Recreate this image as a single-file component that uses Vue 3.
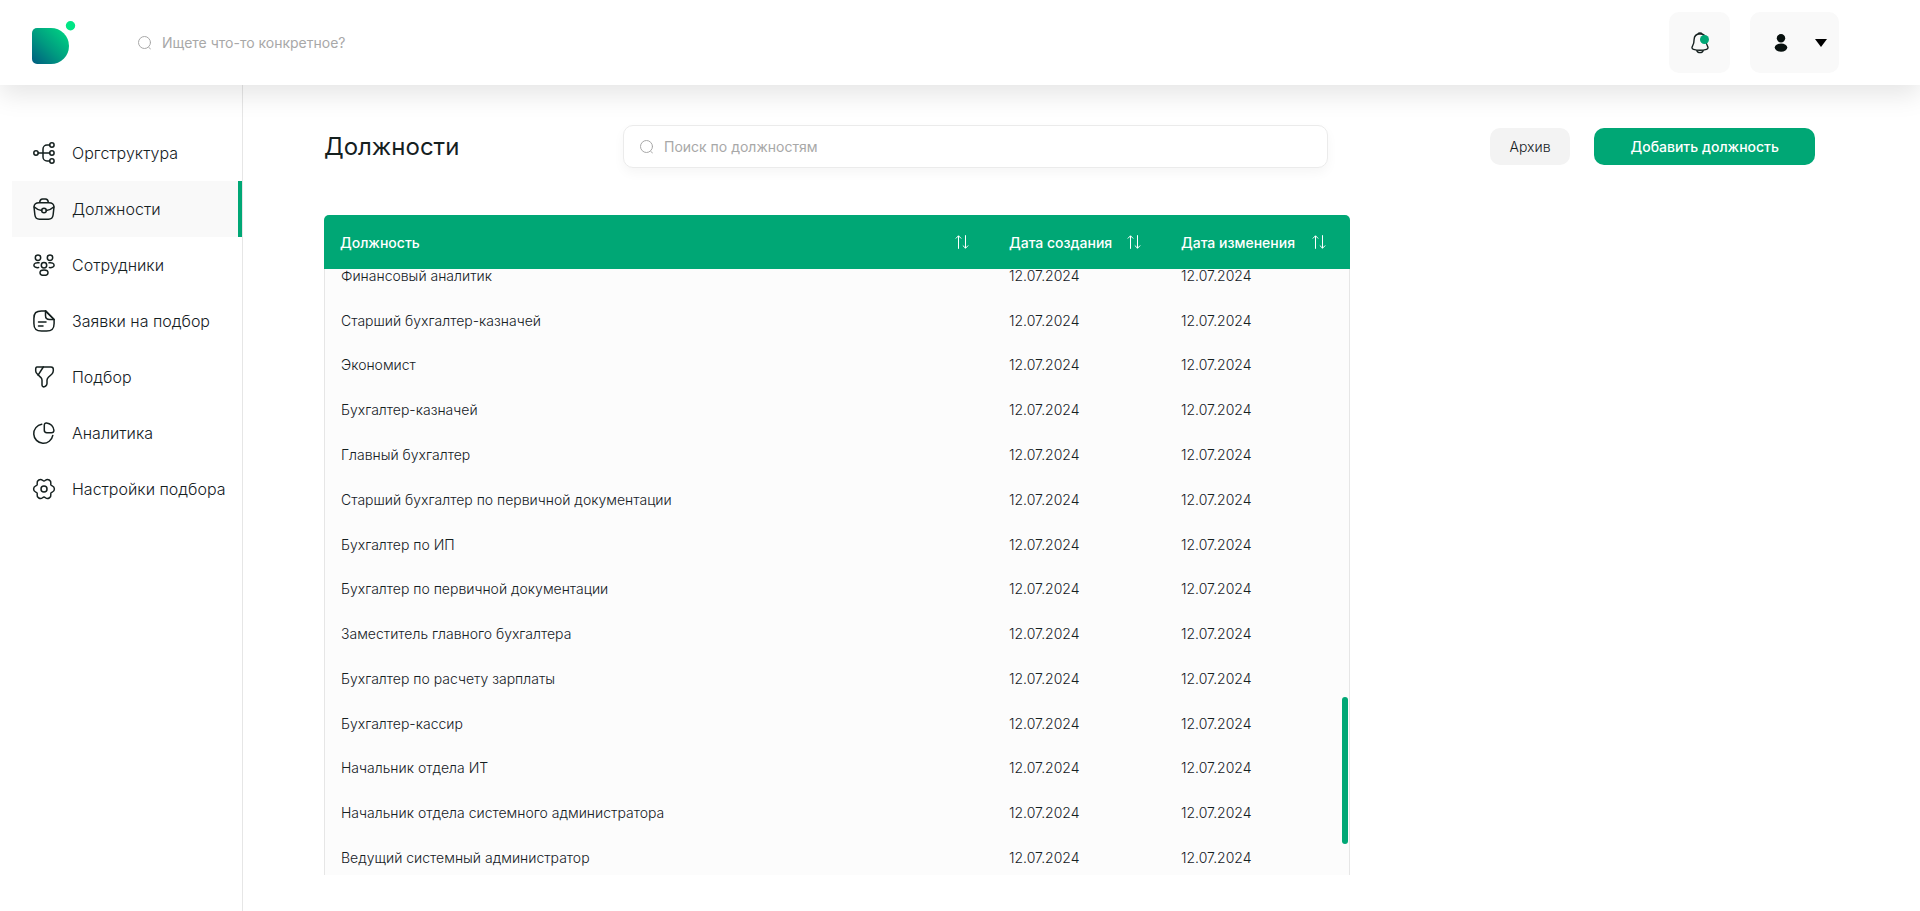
<script setup>
import { ref, onMounted } from 'vue'

const menu = [
  { id: 'org', label: 'Оргструктура' },
  { id: 'jobs', label: 'Должности' },
  { id: 'staff', label: 'Сотрудники' },
  { id: 'requests', label: 'Заявки на подбор' },
  { id: 'hiring', label: 'Подбор' },
  { id: 'analytics', label: 'Аналитика' },
  { id: 'settings', label: 'Настройки подбора' }
]
const active = ref('jobs')

const columns = ['Должность', 'Дата создания', 'Дата изменения']
const positions = [
  'Финансовый аналитик',
  'Старший бухгалтер-казначей',
  'Экономист',
  'Бухгалтер-казначей',
  'Главный бухгалтер',
  'Старший бухгалтер по первичной документации',
  'Бухгалтер по ИП',
  'Бухгалтер по первичной документации',
  'Заместитель главного бухгалтера',
  'Бухгалтер по расчету зарплаты',
  'Бухгалтер-кассир',
  'Начальник отдела ИТ',
  'Начальник отдела системного администратора',
  'Ведущий системный администратор'
].map(name => ({ name, created: '12.07.2024', changed: '12.07.2024' }))

// Six-lobed outline of the settings gear: lobes every 60°, dips between them.
function gearPath() {
  const knots = Array.from({ length: 12 }, (_, i) => {
    const a = (i * Math.PI) / 6
    const lobe = i % 2 === 0
    const r = lobe ? 10.4 : 8
    const h = lobe ? 3.6 : 1.6
    const x = 11 + r * Math.cos(a)
    const y = 11 + r * Math.sin(a)
    const dx = -Math.sin(a) * h
    const dy = Math.cos(a) * h
    return { at: [x, y], before: [x - dx, y - dy], after: [x + dx, y + dy] }
  })
  const fmt = p => p.map(v => v.toFixed(2)).join(' ')
  const curves = knots.map((k, i) => {
    const next = knots[(i + 1) % knots.length]
    return `C${fmt(k.after)} ${fmt(next.before)} ${fmt(next.at)}`
  })
  return `M${fmt(knots[0].at)}${curves.join('')}z`
}
const gear = gearPath()

const scroller = ref(null)
onMounted(() => {
  scroller.value.scrollTop = 16
})
</script>

<template>
  <div class="app">
    <header class="topbar">
      <a class="logo" href="#" aria-label="На главную">
        <svg width="44" height="44" viewBox="0 0 44 44">
          <defs>
            <linearGradient id="brand" x1="0" y1="1" x2="0.9" y2="0.1">
              <stop offset="0" stop-color="#005c80" />
              <stop offset="0.5" stop-color="#009a80" />
              <stop offset="1" stop-color="#00cf82" />
            </linearGradient>
          </defs>
          <path d="M5 7h14a18 18 0 0 1 0 36H5a5 5 0 0 1-5-5V12a5 5 0 0 1 5-5z" fill="url(#brand)" />
          <circle cx="38.500" cy="4.700" r="4.700" fill="#00e585" />
        </svg>
      </a>
      <label class="search">
        <svg class="lens" width="14" height="14" viewBox="0 0 14 14">
          <circle cx="6.500" cy="6.500" r="6" /><path d="M10.800 11.500l1.600 1.300" />
        </svg>
        <input type="search" placeholder="Ищете что-то конкретное?" aria-label="Поиск по системе">
      </label>
      <button class="tile bell" type="button" aria-label="Уведомления">
        <svg width="18" height="22" viewBox="0 0 18 22">
          <g fill="none" stroke="#15201f" stroke-width="1.400" stroke-linejoin="round">
            <path d="M9 1.800C5.600 2 3.200 4.300 3.100 7.500c0 3.200-.5 4.800-1.500 6.300-1 1.600-.9 3 .9 3.500 4.200 1.200 8.800 1.200 13 0 1.800-.5 1.900-1.900.9-3.500-1-1.500-1.500-3.100-1.500-6.300C14.800 4.300 12.400 2 9 1.800z" />
            <path d="M7 1.800c.7-1.200 3.300-1.200 4 0M5.600 18.200c1.200 3.200 5.600 3.200 6.800 0" />
          </g>
          <circle cx="13.500" cy="7.500" r="4.500" fill="#00a775" />
        </svg>
      </button>
      <button class="tile user" type="button" aria-label="Профиль">
        <svg width="14" height="18" viewBox="0 0 14 18" fill="#08110f">
          <circle cx="7" cy="4.300" r="4.200" /><ellipse cx="7" cy="13.600" rx="6.300" ry="4.200" />
        </svg>
        <svg width="12" height="8" viewBox="0 0 12 8"><path d="M0 0h12L6 8z" /></svg>
      </button>
    </header>

    <div class="body">
      <nav class="sidebar" aria-label="Разделы">
        <a v-for="m in menu" :key="m.id" href="#" class="item" :class="{ active: m.id === active }" @click.prevent="active = m.id">
          <svg width="22" height="22" viewBox="0 0 22 22" class="glyph">
            <template v-if="m.id === 'org'">
              <circle cx="3" cy="11" r="2.200" /><circle cx="18.900" cy="3" r="2.200" />
              <circle cx="18.900" cy="11" r="2.200" /><circle cx="18.900" cy="19" r="2.200" />
              <path d="M5.200 11h11.500M16.700 3H14a4 4 0 0 0-4 4v8a4 4 0 0 0 4 4h2.700" />
            </template>
            <template v-else-if="m.id === 'jobs'">
              <path d="M6.700 4.300C6.900 2 7.600.9 9.500.9h3c1.900 0 2.600 1.100 2.800 3.400" />
              <path d="M6 4.800h10c3 0 4.800 1.700 5 4l-.9 8.200c-.4 3-1.800 4.200-4.600 4.200h-9c-2.800 0-4.200-1.200-4.600-4.200L1 8.800c.2-2.300 2-4 5-4z" />
              <path d="M1.300 9c2 2 4.400 3 7.400 3.400M20.700 9c-2 2-4.400 3-7.400 3.400" />
              <circle cx="11" cy="12.500" r="2.300" />
            </template>
            <template v-else-if="m.id === 'staff'">
              <circle cx="5" cy="3.700" r="2.700" /><circle cx="17" cy="3.700" r="2.700" />
              <circle cx="11" cy="11.300" r="2.700" /><ellipse cx="11" cy="18.700" rx="4" ry="2.600" />
              <path d="M6 8.800C3.200 8.300.9 9.400.9 11.200c0 1.700 2.100 2.700 4.700 2.400M16 8.800c2.800-.5 5.100.6 5.100 2.400 0 1.700-2.100 2.700-4.700 2.400" />
            </template>
            <template v-else-if="m.id === 'requests'">
              <path d="M12.500.9H8.500C3 .9.900 3 .9 8.500v5c0 5.500 2.100 7.600 7.600 7.600h5c5.500 0 7.600-2.100 7.600-7.600V9.500z" />
              <path d="M12.500.9v4.600c0 3 1 4 4 4h4.600M12.500.9l8.600 8.600M5.500 12h7.500M5.500 16h4.500" />
            </template>
            <template v-else-if="m.id === 'hiring'">
              <path d="M4 1h14c1.400 0 2.300.9 2.300 2.300v1.500c0 1.300-.7 2.500-1.600 3.400l-3.300 3c-.8.800-1.400 1.900-1.400 3v3.300c0 .9-.5 2-1.300 2.500l-1 .6c-1.300.7-2.700-.1-2.700-1.500v-4.900c0-.9-.5-1.900-1.100-2.600L4.300 8C3.300 7 2.700 5.900 2.700 5V3.300C2.700 1.900 3.200 1 4 1z" />
              <path d="M10.300 1L5.100 9.200" />
            </template>
            <template v-else-if="m.id === 'analytics'">
              <path d="M8.800 2.200a9.600 9.600 0 1 0 11 11.200" />
              <path d="M13.500.9c4 .3 7.100 3.400 7.400 7.400.1 1.600-.9 2.400-2.400 2.400h-4.700c-1.500 0-2.500-.8-2.500-2.400V3.200c0-1.500.8-2.400 2.200-2.300z" />
            </template>
            <template v-else>
              <circle cx="11" cy="11" r="3" />
              <path :d="gear" />
            </template>
          </svg>
          <span>{{ m.label }}</span>
        </a>
      </nav>

      <main class="content">
        <div class="toolbar">
          <h1>Должности</h1>
          <label class="search boxed">
            <svg class="lens" width="14" height="14" viewBox="0 0 14 14">
              <circle cx="6.500" cy="6.500" r="6" /><path d="M10.800 11.500l1.600 1.300" />
            </svg>
            <input type="search" placeholder="Поиск по должностям" aria-label="Поиск по должностям">
          </label>
          <div class="actions">
            <button type="button" class="btn">Архив</button>
            <button type="button" class="btn primary">Добавить должность</button>
          </div>
        </div>

        <section class="panel">
          <div ref="scroller" class="scroller">
            <table>
              <thead>
                <tr>
                  <th v-for="c in columns" :key="c" scope="col">
                    <div class="head">
                      <span>{{ c }}</span>
                      <button type="button" class="sort" :aria-label="'Сортировать: ' + c">
                        <svg width="14" height="14" viewBox="0 0 14 14">
                          <path d="M3.500 13.800V.8M.8 3.500L3.500.8l2.700 2.700M10.500.2v13M7.800 10.500l2.700 2.700 2.700-2.700" />
                        </svg>
                      </button>
                    </div>
                  </th>
                </tr>
              </thead>
              <tbody>
                <tr v-for="p in positions" :key="p.name">
                  <td>{{ p.name }}</td>
                  <td>{{ p.created }}</td>
                  <td>{{ p.changed }}</td>
                </tr>
              </tbody>
            </table>
          </div>
          <div class="thumb"></div>
        </section>
      </main>
    </div>
  </div>
</template>

<style>
body {
  margin: 0;
  background: #fff;
}
</style>

<style scoped>
.app {
  display: flex;
  flex-direction: column;
  height: 100vh;
  overflow: hidden;
  font-family: Inter, 'Liberation Sans', sans-serif;
  font-size: 14px;
  color: #15201f;
}
.app *,
.app *::before {
  box-sizing: border-box;
}
button,
input {
  font: inherit;
  color: inherit;
  border: 0;
  margin: 0;
  padding: 0;
  background: none;
}
button {
  cursor: pointer;
}
svg {
  display: block;
  flex: none;
}

.topbar {
  position: relative;
  z-index: 2;
  display: flex;
  align-items: center;
  flex: none;
  padding: 12px 81px 12px 32px;
  background: #fff;
  box-shadow: 0 10px 24px rgba(0, 0, 0, 0.1);
}
.logo {
  margin-right: 62px;
}
.search {
  display: flex;
  align-items: center;
  gap: 10px;
  flex: 1;
}
.search input {
  flex: 1;
  min-width: 0;
  outline: none;
}
.search input::placeholder {
  color: #a8a8a8;
  opacity: 1;
}
.lens {
  fill: none;
  stroke: #a8a8a8;
  stroke-width: 1;
  stroke-linecap: round;
}
.tile {
  display: flex;
  align-items: center;
  justify-content: center;
  height: 61px;
  border-radius: 10px;
  background: #f9f9f9;
}
.bell {
  width: 61px;
  margin-right: 20px;
}
.user {
  width: 89px;
  justify-content: space-between;
  padding: 0 12px 0 24px;
}

.body {
  display: flex;
  flex: 1;
  min-height: 0;
}
.sidebar {
  flex: none;
  width: 243px;
  padding: 40px 0 0 12px;
  border-right: 1px solid #e6e6e6;
}
.item {
  display: flex;
  align-items: center;
  gap: 17px;
  height: 56px;
  padding-left: 21px;
  font-size: 16px;
  font-weight: 300;
  color: #15201f;
  white-space: nowrap;
  text-decoration: none;
}
.item.active {
  background: #f9f9f9;
  border-right: 4px solid #00a775;
}
.glyph {
  fill: none;
  stroke: #15201f;
  stroke-width: 1.5;
  stroke-linecap: round;
  stroke-linejoin: round;
  overflow: visible;
}

.content {
  display: flex;
  flex-direction: column;
  flex: 1;
  min-width: 0;
  padding: 40px 105px 36px 81px;
}
.toolbar {
  display: flex;
  align-items: center;
  flex: none;
}
h1 {
  flex: none;
  width: 299px;
  margin: 0;
  font-size: 24px;
  font-weight: 400;
  line-height: 32px;
}
.boxed {
  height: 43px;
  padding: 0 16px;
  border: 1px solid #ebebeb;
  border-radius: 10px;
  box-shadow: 0 5px 12px rgba(0, 0, 0, 0.04);
}
.actions {
  display: flex;
  gap: 24px;
  margin-left: 162px;
}
.btn {
  height: 37px;
  padding: 0 20px;
  border-radius: 10px;
  background: #f3f3f3;
  font-weight: 300;
  white-space: nowrap;
}
.primary {
  padding: 0 36px;
  background: #00a775;
  color: #fff;
  font-weight: 500;
}

.panel {
  position: relative;
  display: flex;
  flex: 1;
  min-height: 0;
  width: calc(100% - 465px);
  margin-top: 47px;
}
.scroller {
  flex: 1;
  overflow-y: auto;
  scrollbar-width: none;
  border-radius: 5px 5px 0 0;
}
table {
  width: 100%;
  height: 681px;
  border-collapse: separate;
  border-spacing: 0;
  table-layout: fixed;
}
th {
  position: sticky;
  top: 0;
  z-index: 1;
  height: 54px;
  padding: 0 24px 0 16px;
  background: #00a775;
  color: #fff;
  font-weight: 500;
  text-align: left;
}
th:nth-child(2) {
  width: 172px;
}
th:nth-child(3) {
  width: 185px;
}
.head {
  display: flex;
  align-items: center;
  justify-content: space-between;
  white-space: nowrap;
}
.sort svg {
  fill: none;
  stroke: #fff;
  stroke-width: 1;
}
td {
  padding: 0 16px;
  background: #fcfcfc;
  font-weight: 300;
  white-space: nowrap;
}
td:first-child {
  border-left: 1px solid #e6e6e6;
}
td:last-child {
  border-right: 1px solid #e6e6e6;
}
.thumb {
  position: absolute;
  right: 2px;
  bottom: 31px;
  width: 6px;
  height: 147px;
  border-radius: 3px;
  background: #00a775;
}
</style>
